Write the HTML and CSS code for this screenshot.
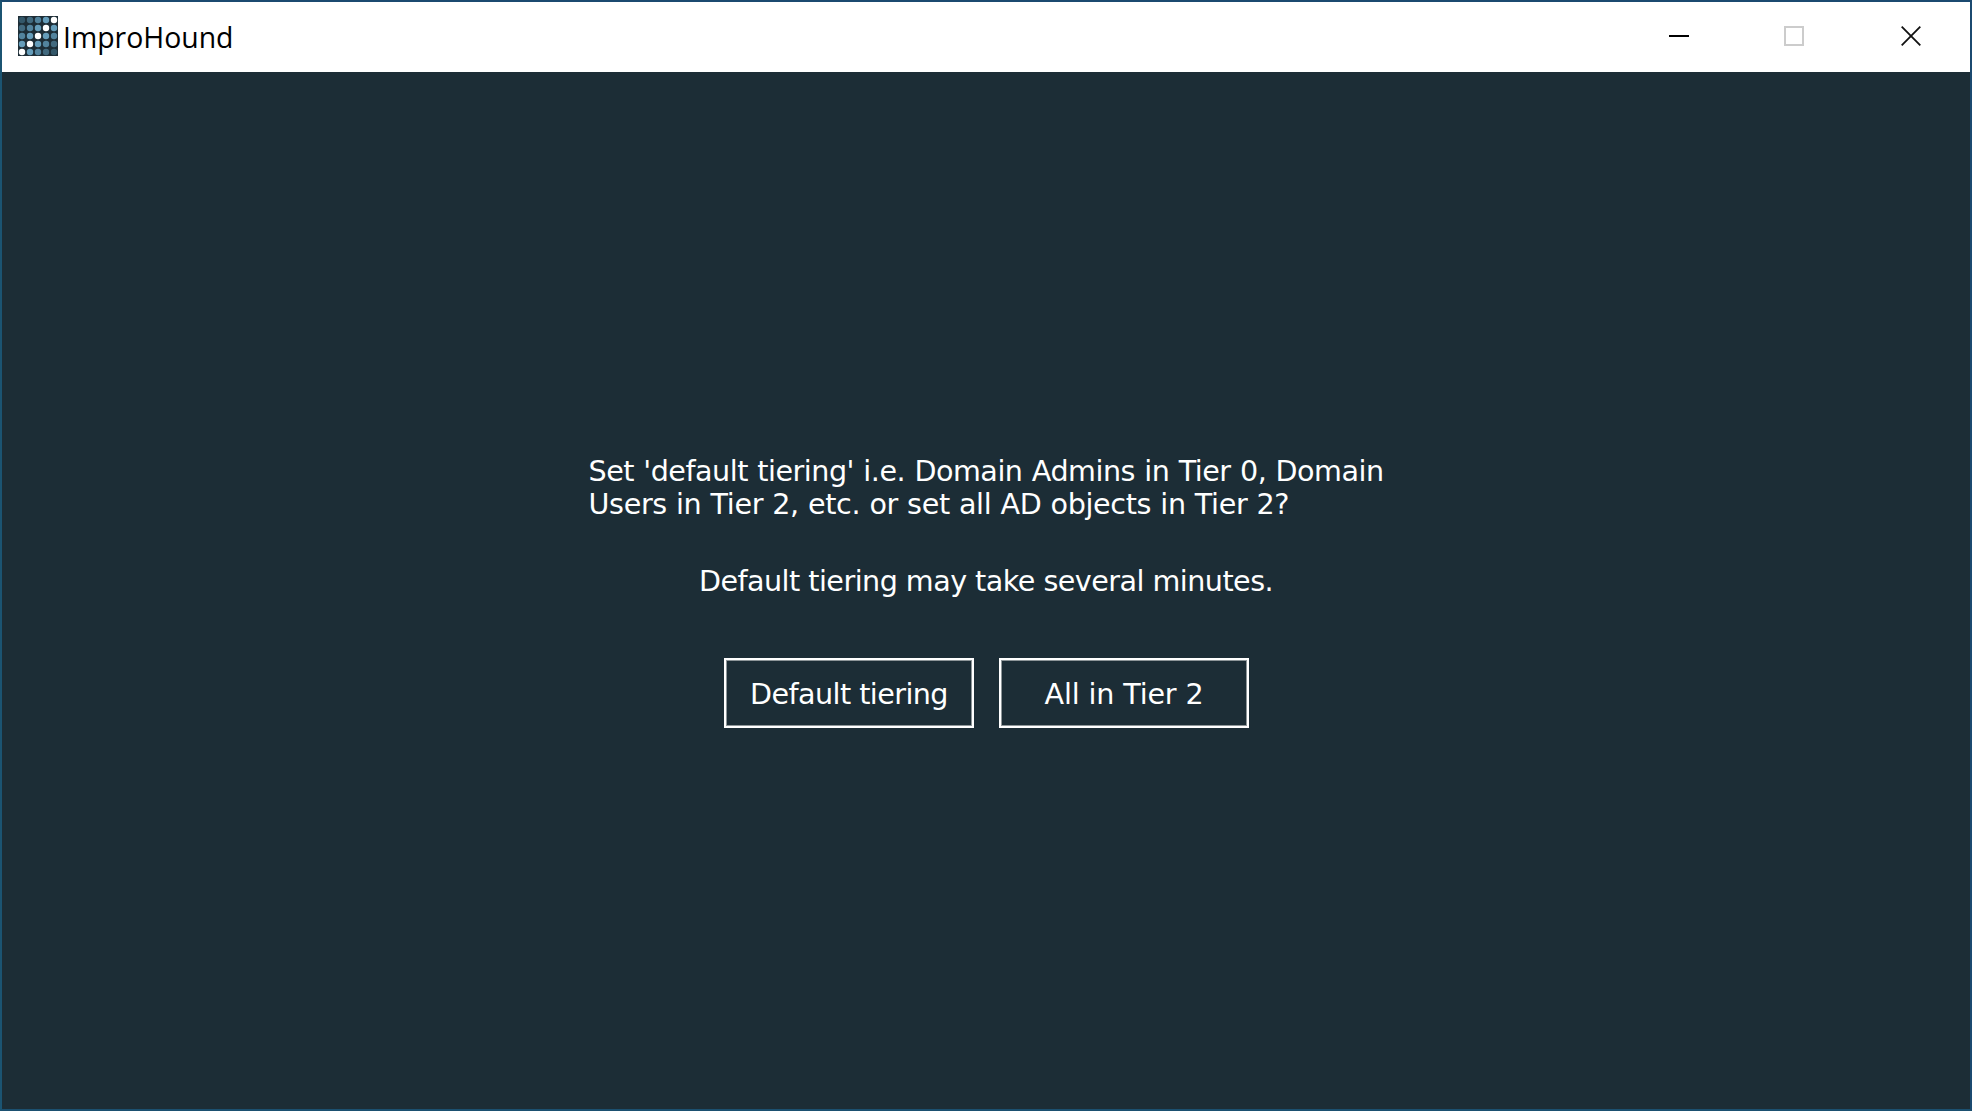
FILE: index.html
```html
<!DOCTYPE html>
<html lang="en">
<head>
<meta charset="utf-8">
<title>ImproHound</title>
<link rel="stylesheet" href="styles.css">
</head>
<body>
<div class="window">
  <header class="titlebar">
    <svg class="logo" width="40" height="40" viewBox="0 0 40 40">
      <rect width="40" height="40" fill="#1d2d36"/>
      <g class="c1"><circle cx="4" cy="4" r="3.2"/><circle cx="36" cy="36" r="3.2"/></g>
      <g class="c2"><circle cx="12" cy="4" r="3.2"/><circle cx="4" cy="12" r="3.2"/><circle cx="36" cy="28" r="3.2"/><circle cx="28" cy="36" r="3.2"/></g>
      <g class="c3"><circle cx="20" cy="4" r="3.2"/><circle cx="12" cy="12" r="3.2"/><circle cx="4" cy="20" r="3.2"/><circle cx="36" cy="20" r="3.2"/><circle cx="28" cy="28" r="3.2"/><circle cx="20" cy="36" r="3.2"/></g>
      <g class="c4"><circle cx="28" cy="4" r="3.2"/><circle cx="20" cy="12" r="3.2"/><circle cx="12" cy="20" r="3.2"/><circle cx="4" cy="28" r="3.2"/><circle cx="36" cy="12" r="3.2"/><circle cx="28" cy="20" r="3.2"/><circle cx="20" cy="28" r="3.2"/><circle cx="12" cy="36" r="3.2"/></g>
      <g class="c5"><circle cx="36" cy="4" r="3.2"/><circle cx="28" cy="12" r="3.2"/><circle cx="20" cy="20" r="3.2"/><circle cx="12" cy="28" r="3.2"/><circle cx="4" cy="36" r="3.2"/></g>
    </svg>
    <h1 class="title">ImproHound</h1>
    <div class="controls">
      <svg width="20" height="20" viewBox="0 0 20 20"><path d="M0 10h20" stroke="#000" stroke-width="2"/></svg>
      <svg width="20" height="20" viewBox="0 0 20 20"><path d="M1 1h18v18H1z" fill="none" stroke="#ccc" stroke-width="2"/></svg>
      <svg width="20" height="20" viewBox="0 0 20 20"><path d="M.7 .7l18.6 18.6M19.3 .7L.7 19.3" stroke="#111" stroke-width="1.8"/></svg>
    </div>
  </header>
  <main class="content">
    <p class="question"><span class="line-one">Set 'default tiering' i.e. Domain Admins in Tier 0, Domain</span><br><span class="line-two">Users in Tier 2, etc. or set all AD objects in Tier 2?</span></p>
    <p class="note">Default tiering may take several minutes.</p>
    <div class="actions">
      <button class="button default">Default tiering</button>
      <button class="button all">All in Tier 2</button>
    </div>
  </main>
</div>
</body>
</html>
```
FILE: styles.css
```css
* { box-sizing: border-box; }
body { margin: 0; }
.window {
  width: 1972px;
  height: 1111px;
  border: 2px solid;
  border-color: #1b4a70 #1b4a70 #1b5070 #1b5472;
  display: flex;
  flex-direction: column;
  background: #1c2d36;
}
.titlebar {
  height: 70px;
  flex: none;
  display: flex;
  align-items: center;
  padding: 0 49px 0 16px;
  background: #fff;
}
.logo { margin-bottom: 2px; }
.c1 { fill: #335769; }
.c2 { fill: #41697e; }
.c3 { fill: #52839d; }
.c4 { fill: #659dba; }
.c5 { fill: #fff; }
.title {
  margin: 0 0 0 5px;
  font: 400 28.4px/40px "Open Sans", "Noto Sans", sans-serif;
  color: #000;
}
.controls {
  display: flex;
  gap: 95px;
  margin: 0 0 2px auto;
}
.controls svg:last-child { margin-left: 2px; }
.controls svg { display: block; }
.content {
  flex: 1;
  display: flex;
  flex-direction: column;
  align-items: center;
  padding-top: 383px;
  color: #fff;
  font: 28.6px/33px "DejaVu Sans", sans-serif;
  white-space: nowrap;
}
.question { width: 795px; margin: 0; }
.line-one { letter-spacing: -0.48px; word-spacing: 0.7px; }
.line-two { letter-spacing: -0.34px; word-spacing: 0.4px; }
.note { margin: 44px 0 0; letter-spacing: -0.53px; }
.actions {
  display: flex;
  gap: 25px;
  margin: 60px 0 0 1px;
}
.button {
  width: 250px;
  height: 70px;
  padding: 3px 0 0;
  border: 2px solid #fff;
  box-shadow: inset 0 0 0 1px #8e9699;
  background: transparent;
  color: inherit;
  font: inherit;
}
.default { letter-spacing: -0.56px; }
.all { letter-spacing: -0.15px; }
```
